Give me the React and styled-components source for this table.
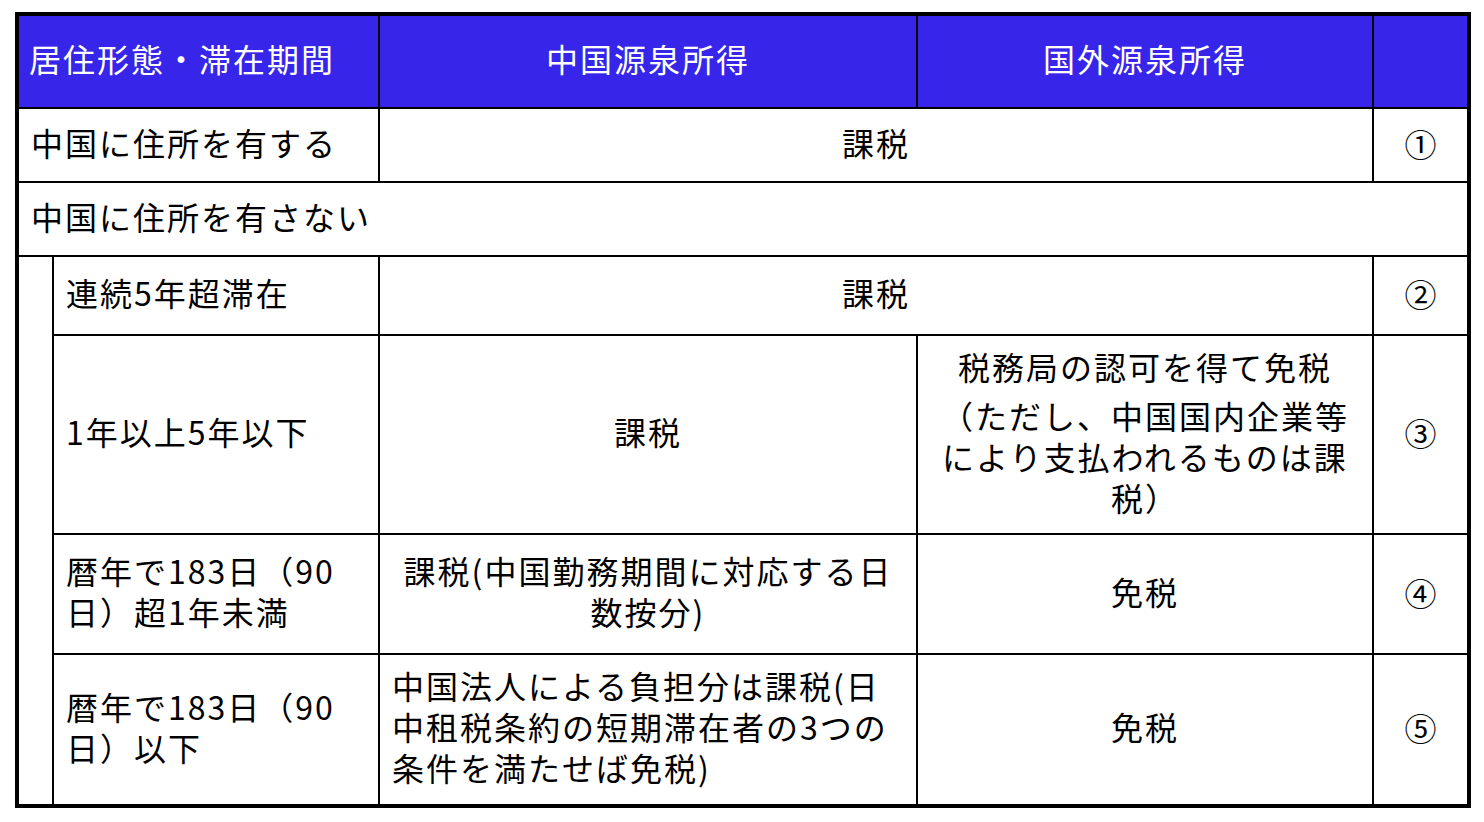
import React from 'react';
import styled, {createGlobalStyle} from 'styled-components';

const GlobalStyle = createGlobalStyle`
  html, body {
    margin: 0;
    padding: 0;
    background: #fff;
  }
  body {
    font-family: "Noto Sans CJK JP", "Noto Sans", sans-serif;
    color: #000;
  }
`

const Table = styled.div`
  display: grid;
  grid-template-columns: 33px 324px 536px 454px 93px;
  grid-template-rows: 91px 72px 72px 77px 197px 118px 149px;
  gap: 2px;
  padding: 4px;
  background: #000;
  width: fit-content;
  margin: 12px 0 0 15px;
`

const Cell = styled.div`
  grid-column: ${p => p.span || 'auto'};
  background: #fff;
  display: flex;
  flex-direction: column;
  justify-content: center;
  align-items: ${p => p.left ? 'flex-start' : 'center'};
  text-align: ${p => p.left ? 'left' : 'center'};
  padding: 0 ${p => p.left ? '12px' : '0'} 6px;
  font-size: 32px;
  letter-spacing: 2px;
  line-height: 41px;
  white-space: nowrap;
`

const HeadCell = styled(Cell)`
  background: #3725e9;
  color: #fff;
  padding-left: ${p => p.left ? '10px' : '0'};
`

const Indent = styled.div`
  grid-column: 1;
  grid-row: 4 / 8;
  background: #fff;
`

const Mark = styled(Cell)`
  letter-spacing: 0;
  padding-bottom: 4px;
`

const Note = styled.div`
  margin-top: 8px;
`

export default function App() {
    return (
        <>
            <GlobalStyle/>
            <Table>
                <HeadCell span="1 / 3" left>居住形態・滞在期間</HeadCell>
                <HeadCell>中国源泉所得</HeadCell>
                <HeadCell>国外源泉所得</HeadCell>
                <HeadCell/>

                <Cell span="1 / 3" left>中国に住所を有する</Cell>
                <Cell span="3 / 5">課税</Cell>
                <Mark>①</Mark>

                <Cell span="1 / 6" left>中国に住所を有さない</Cell>

                <Indent/>
                <Cell left>連続5年超滞在</Cell>
                <Cell span="3 / 5">課税</Cell>
                <Mark>②</Mark>

                <Cell left>1年以上5年以下</Cell>
                <Cell>課税</Cell>
                <Cell>
                    <div>税務局の認可を得て免税</div>
                    <Note>（ただし、中国国内企業等<br/>により支払われるものは課<br/>税）</Note>
                </Cell>
                <Mark>③</Mark>

                <Cell left>暦年で183日（90<br/>日）超1年未満</Cell>
                <Cell>課税(中国勤務期間に対応する日<br/>数按分)</Cell>
                <Cell>免税</Cell>
                <Mark>④</Mark>

                <Cell left>暦年で183日（90<br/>日）以下</Cell>
                <Cell left>中国法人による負担分は課税(日<br/>中租税条約の短期滞在者の3つの<br/>条件を満たせば免税)</Cell>
                <Cell>免税</Cell>
                <Mark>⑤</Mark>
            </Table>
        </>
    );
}
